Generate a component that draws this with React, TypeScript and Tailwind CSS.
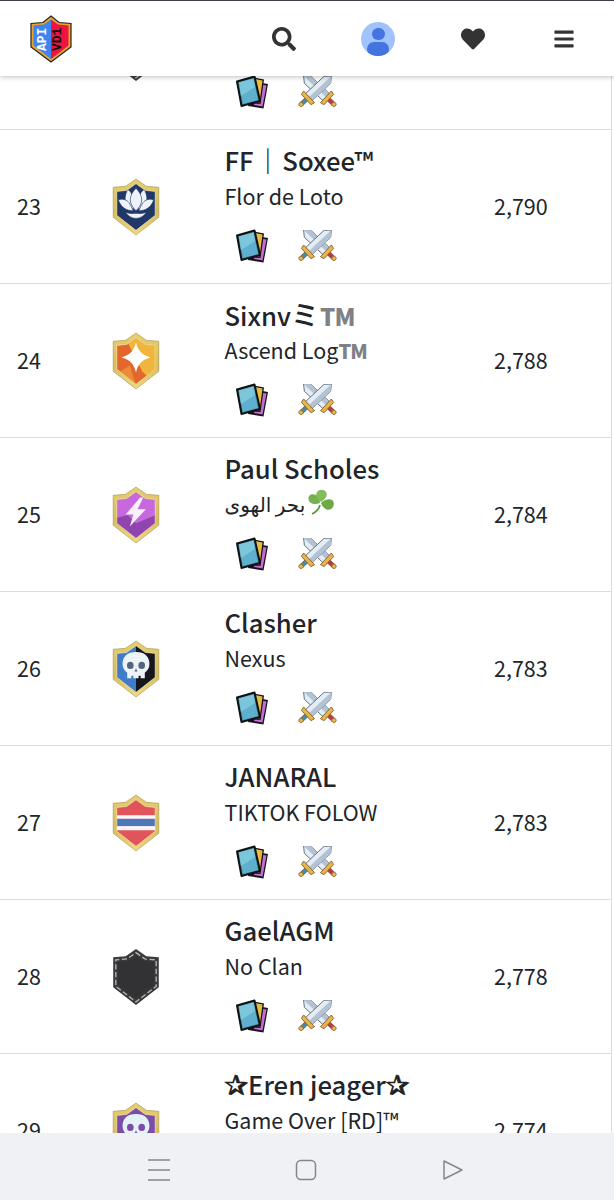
import type { ReactNode } from "react";
import { FaBars, FaHeart, FaSearch } from "react-icons/fa";

const OUTER = "M24 1L34 8L46 9V38L24 55L2 38V9L14 8Z";
const INNER = "M24 5.500L33 12L42.500 13V36L24 50.500L5.500 36V13L15 12Z";

function Badge({ children }: { children: ReactNode }) {
  return (
    <svg width="50" height="58" viewBox="0 0 48 56">
      <defs>
        <linearGradient id="gold" x1="0" y1="0" x2="0" y2="1">
          <stop offset="0" stopColor="#e6cf72" />
          <stop offset="0.6" stopColor="#d6bd5c" />
          <stop offset="1" stopColor="#f0dc84" />
        </linearGradient>
        <clipPath id="inner">
          <path d={INNER} />
        </clipPath>
      </defs>
      <path d={OUTER} fill="url(#gold)" stroke="#a8924a" strokeWidth="0.6" />
      <g clipPath="url(#inner)">{children}</g>
      <path d={INNER} fill="none" stroke="#fff6c8" strokeWidth="0.5" />
    </svg>
  );
}

function Skull({ fill, eye }: { fill: string; eye: string }) {
  return (
    <g>
      <path
        d="M24 11.500c-8.500 0-13 4.500-13 11.500 0 4 1.800 7 4.500 8.500V37h4v-2.500h2V37h5v-2.500h2V37h4v-5.500c2.700-1.500 4.500-4.500 4.500-8.500 0-7-4.500-11.500-13-11.500Z"
        fill={fill}
      />
      <ellipse cx="18.500" cy="24.500" rx="3.200" ry="3.400" fill={eye} />
      <ellipse cx="29.500" cy="24.500" rx="3.200" ry="3.400" fill={eye} />
      <path d="M24 27.500l1.500 3h-3Z" fill={eye} />
    </g>
  );
}

function LotusBadge() {
  return (
    <Badge>
      <rect width="48" height="56" fill="#1f3868" />
      <g fill="#eef3fa" stroke="#1f3868" strokeWidth="0.6">
        <path d="M16 11c2.500 1.500 4 4 4.500 7L22 30c-5-1-8.500-5-8.500-10 0-3 1-6 2.500-9Z" />
        <path d="M32 11c-2.500 1.500-4 4-4.500 7L26 30c5-1 8.500-5 8.500-10 0-3-1-6-2.500-9Z" />
        <path d="M24 10c3.500 3.500 5.500 7 5.500 11 0 4-2.500 8-5.500 10.500-3-2.500-5.500-6.500-5.500-10.500 0-4 2-7.500 5.500-11Z" />
        <path d="M7 21c4-1.500 8 0 10.500 3l4 7.500C15 32 9 28 7 21Z" />
        <path d="M41 21c-4-1.500-8 0-10.500 3l-4 7.500C33 32 39 28 41 21Z" />
        <path d="M14 33c3.500 1.500 7 1.500 10 1 3 .5 6.500.5 10-1-2 3.500-6 6-10 6s-8-2.500-10-6Z" />
      </g>
    </Badge>
  );
}

function StarBadge() {
  return (
    <Badge>
      <rect width="48" height="56" fill="#e3672c" />
      <path d="M14 6H48V56L30 38Z" fill="#efb53c" />
      <path d="M6 40L18 32L24 52Z" fill="#ec8a35" />
      <path d="M24 10c1.800 7.500 5 12 14 14.500-9 2.500-12.200 7-14 14.500-1.800-7.500-5-12-14-14.500 9-2.500 12.200-7 14-14.500Z" fill="#fdfdfb" />
    </Badge>
  );
}

function BoltBadge() {
  return (
    <Badge>
      <rect width="48" height="56" fill="#c768dc" />
      <path d="M0 32L16 28L24 36L48 26V56H0Z" fill="#8f45ad" />
      <path d="M28 11L14 27.500H21.500L18 39L33.500 22.500H25.500L31 11Z" fill="#f8f1fb" />
    </Badge>
  );
}

function SkullBadge() {
  return (
    <Badge>
      <rect width="24" height="56" fill="#3f7dca" />
      <rect x="24" width="24" height="56" fill="#15171c" />
      <Skull fill="#eef3f7" eye="#51657e" />
    </Badge>
  );
}

function StripeBadge() {
  return (
    <Badge>
      <rect width="48" height="56" fill="#e2545c" />
      <rect y="20.500" width="48" height="3.500" fill="#f7f7f7" />
      <rect y="24" width="48" height="7" fill="#4c78ba" />
      <rect y="31" width="48" height="4" fill="#f7f7f7" />
    </Badge>
  );
}

function NoClanBadge() {
  return (
    <svg width="50" height="58" viewBox="0 0 48 56">
      <path d={OUTER} fill="#3a3a3c" />
      <path d="M24 4.500L32.500 10.500L43.500 11.500V37L24 52L4.500 37V11.500L15.500 10.500Z" fill="none" stroke="#b5b5b5" strokeWidth="1.300" strokeDasharray="5 2.500" />
      <path d="M24 7L31.500 12.500L41.500 13.500V36L24 49L6.500 36V13.500L16.500 12.500Z" fill="#323234" />
    </svg>
  );
}

function PurpleSkullBadge() {
  return (
    <Badge>
      <rect width="48" height="56" fill="#7d4ca8" />
      <Skull fill="#e2f2f6" eye="#7d4ca8" />
    </Badge>
  );
}

function CardsIcon() {
  return (
    <svg width="32" height="34" viewBox="0 0 32 34" className="-mt-[2px]">
      <path d="M16 6L32 9L27.500 33.500L12 31Z" fill="#151318" strokeLinejoin="round" />
      <path d="M20 8.500L30.500 10.500L26.500 31.500L18 30Z" fill="#c56bd6" />
      <path d="M16 2L28 4.500L24.500 29L12 28Z" fill="#151318" />
      <path d="M19 4L26.500 5.500L23.500 27.500L18 27Z" fill="#e9bd45" />
      <path d="M1 6.500L18.500 1.500L24 26L5.500 31Z" fill="#3f7f9c" stroke="#111" strokeWidth="2" strokeLinejoin="round" />
      <path d="M3 7.500L17.500 3.500L22 25L6.800 29Z" fill="#5fb0cf" />
      <path d="M3 7.500L17.500 3.500L19 12L5 21Z" fill="#7cc6dc" />
    </svg>
  );
}

function Sword({ side }: { side: "left" | "right" }) {
  const handle = side === "left" ? "#3d8db5" : "#c5344b";
  const rotate = side === "left" ? 47 : -47;
  return (
    <g transform={`translate(19.500 13) rotate(${rotate})`}>
      <path d="M-2 14h4v7.500h-4Z" fill={handle} stroke="#5a4a3a" strokeWidth="0.600" />
      <circle cx="0" cy="22.500" r="2.200" fill="#e9b44a" stroke="#7a5a25" strokeWidth="0.700" />
      <path d="M-4.800 12V-13.500L0 -19L4.800 -13.500V12Z" fill="#e4edf5" stroke="#5f6d7c" strokeWidth="0.900" />
      <path d="M0 -19L4.800 -13.500V12H0Z" fill="#b3c3d3" />
      <path d="M-8 11.500H8L7 15.500H-7Z" fill="#e9b44a" stroke="#7a5a25" strokeWidth="0.800" strokeLinejoin="round" />
    </g>
  );
}

function SwordsIcon() {
  return (
    <svg width="39" height="35" viewBox="0 0 39 35">
      <Sword side="right" />
      <Sword side="left" />
    </svg>
  );
}

function Logo() {
  return (
    <svg width="42" height="48" viewBox="0 0 42 48">
      <path d="M21 1L29 7.500L41 8.500V32L21 47L1 32V8.500L13 7.500Z" fill="#e7a52a" stroke="#222" strokeWidth="1.200" />
      <path d="M21 4.500L21 44L3.500 30.500V10.500L14 9.500Z" fill="#3f84f2" />
      <path d="M21 4.500L28 9.500L38.500 10.500V30.500L21 44Z" fill="#ee1340" />
      <text transform="translate(16 36) rotate(-90)" fill="#fff" fontSize="13" fontWeight="700" fontFamily="Liberation Mono, monospace">API</text>
      <text transform="translate(31 36) rotate(-90)" fill="#111" fontSize="13" fontWeight="700" fontFamily="Liberation Mono, monospace">VD1</text>
    </svg>
  );
}

function Clover() {
  return (
    <svg width="28" height="27" viewBox="0 0 28 27" className="-mt-[4px] ml-[2px] shrink-0">
      <path d="M13 16c-1 4-4 7-8 9" fill="none" stroke="#5c9c3c" strokeWidth="1.800" />
      <path d="M13 14C8 16 2 15 1.500 10 1 6 5 4 9 6c3 1.500 4 5 4 8Z" fill="#76b04f" />
      <path d="M14 13C10 10 8 6 10 3c2-3 7-3 9 0 2 3 0 7-5 10Z" fill="#82bd5a" />
      <path d="M14 14c3-3 8-5 11-3 3 2 2 7-1 9-3 2-8 0-10-6Z" fill="#6ca845" />
    </svg>
  );
}

function GrayTm({ size }: { size: string }) {
  return <span className={`${size} font-black tracking-[-1px] text-[#7f8187]`}>TM</span>;
}

function Star() {
  return <span className="text-[28px] leading-none text-[#222] [-webkit-text-stroke:0.8px_#222]">✰</span>;
}

type Player = {
  rank: string;
  badge: ReactNode;
  name: ReactNode;
  clan: ReactNode;
  score: string;
};

const players: Player[] = [
  { rank: "", badge: <NoClanBadge />, name: "", clan: "", score: "" },
  {
    rank: "23",
    badge: <LotusBadge />,
    name: (
      <>
        FF<span className="mx-[1.5px] font-bold">｜</span>Soxee™
      </>
    ),
    clan: "Flor de Loto",
    score: "2,790",
  },
  {
    rank: "24",
    badge: <StarBadge />,
    name: (
      <>
        Sixnv<span className="text-[28px]">ミ</span>
        <GrayTm size="ml-[1px] text-[24px]" />
      </>
    ),
    clan: (
      <>
        Ascend Log<GrayTm size="text-[20px]" />
      </>
    ),
    score: "2,788",
  },
  {
    rank: "25",
    badge: <BoltBadge />,
    name: "Paul Scholes",
    clan: (
      <span className="flex items-center">
        <span dir="rtl" className="text-[20px]">بحر الهوى</span>
        <Clover />
      </span>
    ),
    score: "2,784",
  },
  { rank: "26", badge: <SkullBadge />, name: "Clasher", clan: "Nexus", score: "2,783" },
  { rank: "27", badge: <StripeBadge />, name: "JANARAL", clan: "TIKTOK FOLOW", score: "2,783" },
  { rank: "28", badge: <NoClanBadge />, name: "GaelAGM", clan: "No Clan", score: "2,778" },
  {
    rank: "29",
    badge: <PurpleSkullBadge />,
    name: (
      <>
        <Star />
        Eren jeager
        <Star />
      </>
    ),
    clan: "Game Over [RD]™",
    score: "2,774",
  },
];

function PlayerRow({ player }: { player: Player }) {
  return (
    <div className="flex h-[154px] shrink-0 items-center border-b border-[#dcdcdc] text-[#212529]">
      <div className="-mt-[1px] w-[88px] pl-[17px] text-[21.5px]">{player.rank}</div>
      <div className="flex w-[96px] justify-center">{player.badge}</div>
      <div className="ml-[40.5px] flex h-full w-[269.5px] flex-col pt-[13px]">
        <div className="h-[34px] whitespace-nowrap text-[25.7px] leading-[34px] font-medium">{player.name}</div>
        <div className="mt-[3px] h-[32px] whitespace-nowrap text-[21.5px] leading-[32px]">{player.clan}</div>
        <div className="mt-[17px] flex h-[36px] items-center gap-[30px] pl-[11px]">
          <CardsIcon />
          <SwordsIcon />
        </div>
      </div>
      <div className="-mt-[1px] text-[21.5px]">{player.score}</div>
    </div>
  );
}

export default function App() {
  return (
    <div className="flex h-[1200px] w-[614px] flex-col overflow-hidden bg-white font-['Noto_Sans_CJK_SC','DejaVu_Sans',sans-serif]">
      <header className="relative z-10 flex h-[76px] shrink-0 items-center border-t border-[#3b3f4a] bg-white pl-[30px] shadow-[0_1px_5px_rgba(0,0,0,0.25)]">
        <Logo />
        <FaSearch className="ml-[200px] text-[24px] text-[#333]" />
        <div className="ml-[65px] flex h-[34px] w-[34px] flex-col items-center overflow-hidden rounded-full bg-[#a0c3ff]">
          <div className="mt-[6px] h-[13px] w-[13px] rounded-full bg-[#4374e0]" />
          <div className="mt-[2px] h-[14px] w-[22px] rounded-full bg-[#4374e0]" />
        </div>
        <FaHeart className="ml-[66px] text-[24px] text-[#333]" />
        <FaBars className="ml-[68px] text-[22px] text-[#333]" />
      </header>
      <main className="min-h-0 flex-1 overflow-hidden">
        <div className="-mt-[100px] flex w-[612px] flex-col border-r border-[#dcdcdc]">
          {players.map((player, index) => (
            <PlayerRow key={index} player={player} />
          ))}
        </div>
      </main>
      <nav className="relative z-10 flex h-[67px] shrink-0 items-center bg-[#eff1f5] pt-[6px] text-[#85878c]">
        <svg width="22" height="22" viewBox="0 0 22 22" className="ml-[148px]" fill="none" stroke="currentColor" strokeWidth="1.500">
          <path d="M0 1H22M0 11H22M0 21H22" />
        </svg>
        <svg width="22" height="22" viewBox="0 0 22 22" className="ml-[125px]" fill="none" stroke="currentColor" strokeWidth="1.500">
          <rect x="1.500" y="1.500" width="19" height="19" rx="4.500" />
        </svg>
        <svg width="22" height="22" viewBox="0 0 22 22" className="ml-[125px]" fill="none" stroke="currentColor" strokeWidth="1.500" strokeLinejoin="round">
          <path d="M2 2L20 11L2 20Z" />
        </svg>
      </nav>
    </div>
  );
}
